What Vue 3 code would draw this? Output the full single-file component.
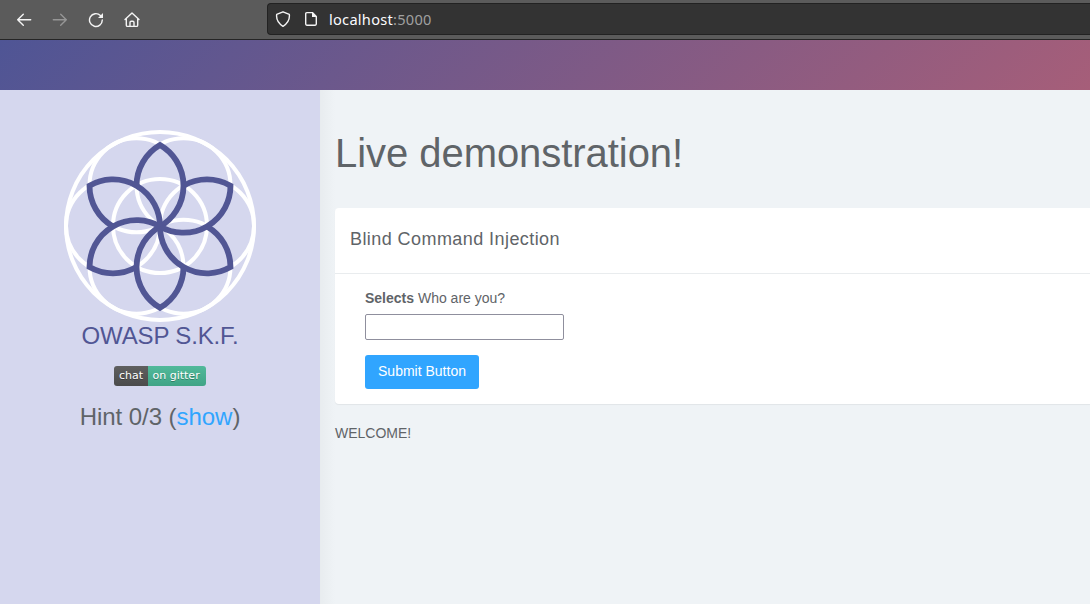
<script setup>
const petals = [0, 60, 120, 180, 240, 300]
const rings = petals.map((a) => ({
  x: 47 * Math.cos((a * Math.PI) / 180),
  y: 47 * Math.sin((a * Math.PI) / 180),
}))
</script>

<template>
  <div class="window">
    <header class="toolbar">
      <nav class="nav">
        <svg width="16" height="16" viewBox="0 0 16 16"><path d="M14.7 7.7H1.7M7.3 2.2L1.7 7.7L7.3 13.2" /></svg>
        <svg class="off" width="16" height="16" viewBox="0 0 16 16"><path d="M1.3 7.7H14.3M8.7 2.2L14.3 7.7L8.7 13.2" /></svg>
        <svg width="16" height="16" viewBox="0 0 16 16"><path d="M14.3 8A6.4 6.4 0 1 1 12.4 3.5" /><path class="solid" d="M15 1V6H10Z" /></svg>
        <svg class="home" width="16" height="16" viewBox="0 0 16 16"><path d="M1 7.6L8 1L15 7.6M2.3 6.6V13.2Q2.3 14.4 3.5 14.4H12.5Q13.7 14.4 13.7 13.2V6.6M6 14.2V10.4Q6 9.2 7.2 9.2H8.8Q10 9.2 10 10.4V14.2" /></svg>
      </nav>
      <div class="address">
        <svg width="16" height="16" viewBox="0 0 16 16"><path d="M8 .8L14.3 3.3Q15.3 10.8 8 15.3Q.7 10.8 1.7 3.3Z" /></svg>
        <svg class="page" width="16" height="16" viewBox="0 0 16 16"><path d="M9.4 1.6H3.8Q2.7 1.6 2.7 2.7V13.1Q2.7 14.2 3.8 14.2H12.2Q13.3 14.2 13.3 13.1V5.6Z" /><path class="solid" d="M9 1.2L13.8 6H9Z" /></svg>
        <span class="url">localhost<span class="port">:5000</span></span>
      </div>
    </header>
    <div class="banner"></div>
    <div class="body">
      <aside class="sidebar">
        <svg class="logo" width="192" height="192" viewBox="-96 -96 192 192">
          <g class="rings">
            <circle r="94" />
            <circle r="47" />
            <circle v-for="(c, i) in rings" :key="i" :cx="c.x" :cy="c.y" r="47" />
          </g>
          <g class="petals" transform="translate(0 .4)">
            <path v-for="a in petals" :key="a" :transform="`rotate(${a})`" d="M-23.5 -40.7A47 47 0 0 1 0 -81.4A47 47 0 0 1 0 0" />
          </g>
        </svg>
        <div class="brand">OWASP S.K.F.</div>
        <div class="badge"><span class="chat">chat</span><span class="gitter">on gitter</span></div>
        <div class="hint">Hint 0/3 (<a>show</a>)</div>
      </aside>
      <main class="main">
        <h1>Live demonstration!</h1>
        <section class="card">
          <h2>Blind Command Injection</h2>
          <form class="form" @submit.prevent>
            <label for="who"><b>Selects</b> Who are you?</label>
            <input id="who" type="text" />
            <button>Submit Button</button>
          </form>
        </section>
        <p class="welcome">WELCOME!</p>
      </main>
    </div>
  </div>
</template>

<style>
body { margin: 0; overflow: hidden; }
</style>

<style scoped>
* { box-sizing: border-box; }
.window { width: 1090px; height: 604px; display: flex; flex-direction: column; overflow: hidden; background: #eff3f6; color: #5f6468; font: 14px/20px "Liberation Sans", Arial, sans-serif; }
.toolbar { height: 40px; flex: none; display: flex; background: #5b5b5b; border-bottom: 1px solid #252525; }
.toolbar svg { display: block; fill: none; stroke: #f4f4f4; stroke-width: 1.4; stroke-linecap: round; stroke-linejoin: round; }
.toolbar .solid { fill: #f4f4f4; stroke: none; }
.toolbar .off { stroke: #969696; }
.nav { width: 267px; flex: none; display: flex; gap: 20px; padding: 12px 0 0 16px; }
.nav .home { margin-left: -.5px; }
.address { flex: 1; height: 32px; margin-top: 3px; padding-left: 7px; display: flex; align-items: center; background: #333; border: 1px solid #222; border-right: 0; border-radius: 4px 0 0 4px; }
.address .page { margin-left: 12px; }
.url { margin-left: 10px; color: #fbfbfe; font: 14.6px/20px "Noto Sans", sans-serif; letter-spacing: .26px; white-space: nowrap; }
.port { color: #a0a0a0; }
.banner { height: 50px; flex: none; background: linear-gradient(135deg, #4f5595 0%, #a65e79 100%); }
.body { flex: 1; display: flex; }
.sidebar { width: 320px; flex: none; padding-top: 40px; display: flex; flex-direction: column; align-items: center; background: #d5d7ee; }
.logo { display: block; flex: none; fill: none; }
.rings { stroke: #fff; stroke-width: 4; }
.petals { stroke: #515694; stroke-width: 5.8; }
.brand { margin-top: -1px; font-size: 24px; line-height: 30px; letter-spacing: -.15px; color: #515694; white-space: nowrap; }
.badge { margin-top: 15px; width: 92px; height: 20px; display: flex; border-radius: 3px; overflow: hidden; color: #fff; font: 11px/20px "DejaVu Sans", sans-serif; text-shadow: 0 1px 0 rgba(1, 1, 1, .3); white-space: nowrap; }
.badge span { text-align: center; }
.chat { width: 34px; background: linear-gradient(#5f5f5f, #4b4b4b); }
.badge .gitter { width: 58px; padding-left: 4.5px; text-align: left; background: linear-gradient(#51b99a, #40a486); }
.hint { margin-top: 16px; font-size: 24px; line-height: 30px; letter-spacing: -.05px; white-space: nowrap; }
.hint a { color: #30a5ff; }
.main { flex: 1; min-width: 0; padding: 40px 0 0 15px; background: linear-gradient(90deg, #e8ecef, #eff3f6 15px); }
h1 { margin: 0; font-size: 40px; line-height: 46px; font-weight: 400; letter-spacing: -.05px; white-space: nowrap; }
.card { margin-top: 32px; height: 196px; border-radius: 4px 0 0 4px; background: #fff; box-shadow: 0 1px 1px rgba(0, 0, 0, .06); }
h2 { margin: 0; height: 66px; padding: 20px 15px; border-bottom: 1px solid #e9ecee; font-size: 18px; line-height: 22px; font-weight: 400; letter-spacing: .43px; }
.form { padding: 14px 30px; display: flex; flex-direction: column; align-items: flex-start; }
label { line-height: 20px; }
input { width: 199px; height: 26px; margin: 6px 0 15px; border: 1px solid #8f8f9d; border-radius: 2px; background: #fff; }
button { width: 114px; height: 34px; padding: 0 0 2px; border: 0; border-radius: 3px; background: #30a5ff; color: #fff; font: inherit; }
.welcome { margin: 19px 0 0; }
</style>
